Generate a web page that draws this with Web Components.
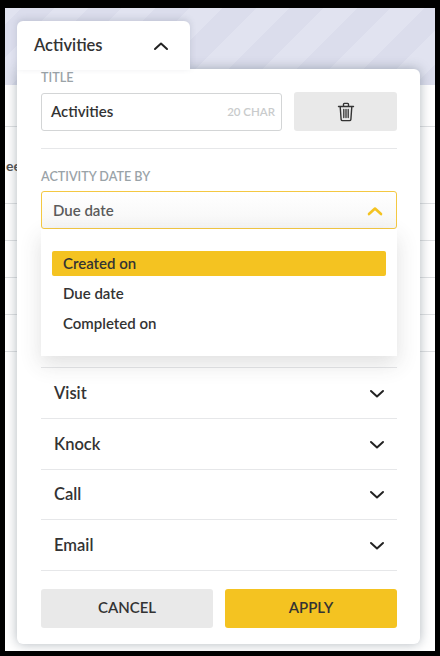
<!DOCTYPE html>
<html><head><meta charset="utf-8"><style>
html,body{margin:0;height:100%;background:#000;overflow:hidden}
body{font-family:Lato,"Open Sans",sans-serif;color:#333}
</style></head><body>
<app-screen>
  <filter-tab slot="tab" label="Activities"></filter-tab>
  <filter-panel slot="panel">
    <title-field></title-field>
    <date-select></date-select>
    <accordion-row slot="rows" label="Visit"></accordion-row>
    <accordion-row slot="rows" label="Knock"></accordion-row>
    <accordion-row slot="rows" label="Call"></accordion-row>
    <accordion-row slot="rows" label="Email"></accordion-row>
  </filter-panel>
</app-screen>
<script>
const chevron=(up,color,w)=>`<svg width="16" height="10" viewBox="0 0 16 10" fill="none" stroke="${color}" stroke-width="${w}" stroke-linecap="round" stroke-linejoin="round" style="margin-top:2px"><path d="${up?'M2 8 L8 2.5 L14 8':'M2 2 L8 7.5 L14 2'}"/></svg>`;
const def=(n,html)=>customElements.define(n,class extends HTMLElement{
  constructor(){super();this.attachShadow({mode:'open'}).innerHTML=typeof html==='function'?html(this):html;}
});
def('app-screen',`<style>
:host{display:block;position:absolute;inset:8px 5px 5px 5px;background:#fff;overflow:hidden}
.hero{height:77px;background:repeating-linear-gradient(135deg,#e1e3f0 0 11.5px,#dbddec 11.5px 35.2px,#e1e3f0 35.2px 47.5px)}
.row{height:36px;border-bottom:1px solid #dfe1e3}
.first{height:41px}
.tall{height:76px;display:flex;align-items:center;font:700 14px Lato,sans-serif;color:#555;white-space:nowrap;padding-left:1px}
.tab{position:absolute;left:12px;top:13px;z-index:2}
.panel{position:absolute;left:12px;top:61px;z-index:1}
</style>
<div class="hero"></div>
<div class="row first"></div><div class="row tall"><span>ee</span></div>
<div class="row"></div><div class="row"></div><div class="row"></div><div class="row"></div>
<div class="panel"><slot name="panel"></slot></div>
<div class="tab"><slot name="tab"></slot></div>`);
def('filter-tab',h=>`<style>
:host{display:block}
.t{width:173px;height:49px;box-sizing:border-box;padding:0 21px 1px 17px;background:#fff;border-radius:6px 6px 0 0;display:flex;align-items:center;justify-content:space-between;font:600 16.5px/24px Lato,sans-serif;color:#333;box-shadow:0 -2px 6px rgba(90,100,120,.2)}
svg{display:block}
</style><div class="t"><span>${h.getAttribute('label')}</span>${chevron(true,'#222',2)}</div>`);
def('filter-panel',`<style>
:host{display:flex;flex-direction:column;width:403px;height:575px;box-sizing:border-box;background:#fff;border-radius:0 6px 6px 6px;padding:0 23px 16px 24px;box-shadow:0 0 12px rgba(60,75,90,.4)}
.rows{border-top:1px solid #e6e7e9}
.actions{display:flex;gap:12px;margin-top:18px}
.spacer{flex:1}
button{flex:1;height:39px;border:0;border-radius:3px;font:600 15px Lato,sans-serif;color:#333;background:#e9e9e9;padding:0 0 4px}
button.p{background:#f4c321}
</style><slot></slot><div class="spacer"></div><div class="rows"><slot name="rows"></slot></div>
<div class="actions"><button>CANCEL</button><button class="p">APPLY</button></div>`);
def('title-field',`<style>
:host{display:block;padding:1px 0 17px;border-bottom:1px solid #e6e7e9}
label{display:block;font:600 12.6px/16px Lato,sans-serif;color:#9aa3a8;margin-bottom:6px}
.g{display:flex;gap:12px;align-items:flex-end}
.i{width:241px;height:38px;box-sizing:border-box;border:1px solid #d3d5d6;border-radius:3px;display:flex;align-items:center;justify-content:space-between;padding:0 6px 2px 9px;font:600 15px Lato,sans-serif;color:#333}
.c{font:600 11.5px Lato,sans-serif;color:#c9cbcc}
.b{width:103px;height:39px;background:#e9e9e9;border-radius:3px;display:flex;align-items:center;justify-content:center}
</style><label>TITLE</label><div class="g"><div class="i"><span>Activities</span><span class="c">20 CHAR</span></div>
<div class="b"><svg width="18" height="20" viewBox="0 0 18 20" fill="none" stroke="#333" stroke-width="1.4" stroke-linecap="round" stroke-linejoin="round"><path d="M1.5 4.5h15M6.5 4.2V2.2c0-.5.3-.8.8-.8h3.4c.5 0 .8.3.8.8v2M3.2 4.7l.9 12.6c.1.8.6 1.3 1.4 1.3h7c.8 0 1.3-.5 1.4-1.3l.9-12.6"/><path stroke-width="1.3" d="M6.8 7.5v8M9 7.5v8M11.2 7.5v8"/></svg></div></div>`);
def('date-select',`<style>
:host{display:block;position:relative;padding-top:20px}
label{display:block;font:600 12.6px/16px Lato,sans-serif;color:#9aa3a8;margin-bottom:6px}
.s{height:38px;box-sizing:border-box;border:1px solid #f4c842;border-radius:3px;background:linear-gradient(#fff,#f6f6f6);display:flex;align-items:center;justify-content:space-between;padding:0 13px 0 11px;font:600 15px Lato,sans-serif;color:#5b5b5b}
.m{position:absolute;left:0;right:0;top:80px;height:127px;box-sizing:border-box;background:#fff;padding:22px 11px;box-shadow:0 8px 20px rgba(60,60,60,.16);z-index:3}
.o{height:30px;display:flex;align-items:center;padding:0 0 2px 11px;font:600 15px Lato,sans-serif;color:#333;box-sizing:border-box}
.o.a{height:25px;background:#f4c321;border-radius:2px;margin-bottom:2.5px}
</style><label>ACTIVITY DATE BY</label>
<div class="s"><span>Due date</span>${chevron(true,'#f4c321',2.6)}</div>
<div class="m"><div class="o a">Created on</div><div class="o">Due date</div><div class="o">Completed on</div></div>`);
def('accordion-row',h=>`<style>
:host{display:block;height:50.75px;box-sizing:border-box;border-bottom:1px solid #e6e7e9}
.r{height:100%;display:flex;align-items:center;justify-content:space-between;padding:0 12px 0 13px;font:600 16.5px Lato,sans-serif;color:#333}
</style><div class="r"><span>${h.getAttribute('label')}</span>${chevron(false,'#222',2)}</div>`);
</script>
</body></html>
